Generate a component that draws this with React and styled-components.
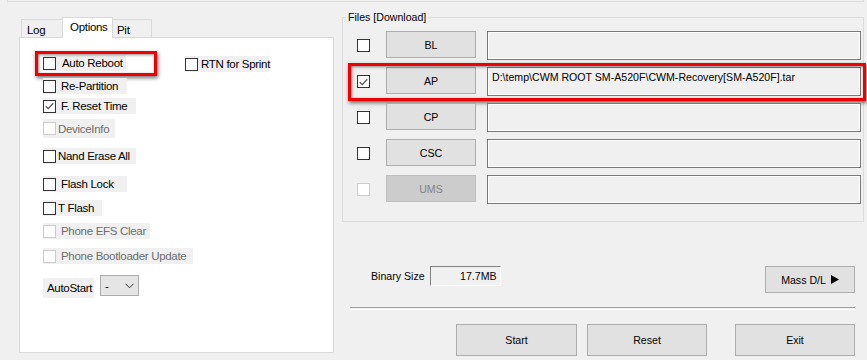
import React from 'react';
import styled, { createGlobalStyle } from 'styled-components';

const GlobalStyle = createGlobalStyle`
  html, body {
    margin: 0;
    padding: 0;
    background: #f0f0f0;
  }
  body {
    width: 867px;
    height: 360px;
    overflow: hidden;
    font-family: "Segoe UI", "Liberation Sans", Arial, sans-serif;
  }
`;

const Window = styled.div`
  width: 867px;
  height: 360px;
  background: #f0f0f0;
  overflow: hidden;
`;

const TopEdge = styled.div`
  height: 1px;
  margin: 0 3px 0 7px;
  border: 1px solid #dcdcdc;
  border-top: none;
`;

const Body = styled.div`
  display: flex;
  align-items: flex-start;
  gap: 8px;
  margin-top: 9px;
  padding-left: 19px;
`;

const LeftColumn = styled.div`
  width: 315px;
  padding-top: 6px;
  font-size: 11.5px;
  letter-spacing: -0.3px;
`;

const TabRow = styled.div`
  display: flex;
  align-items: flex-end;
  height: 21px;
  padding-left: 2px;
  margin-bottom: -1px;
`;

const Tab = styled.div`
  box-sizing: border-box;
  width: ${p => p.$w}px;
  height: ${p => (p.$active ? 21 : 18)}px;
  margin: 0 ${p => (p.$active ? -2 : 0)}px ${p => (p.$active ? 0 : 1)}px;
  padding: ${p => (p.$active ? 2 : 3)}px 0 0 ${p => (p.$active ? 7 : 5)}px;
  border: 1px solid #d9d9d9;
  border-bottom: none;
  background: ${p => (p.$active ? '#fff' : '#f0f0f0')};
  position: ${p => (p.$active ? 'relative' : 'static')};
  z-index: ${p => (p.$active ? 2 : 0)};
  line-height: 14px;
  color: #000;
`;

const Panel = styled.div`
  position: relative;
  box-sizing: border-box;
  height: 316px;
  border: 1px solid #d9d9d9;
  background: #fff;
  padding: 17px 0 0 23px;
`;

const OptionRow = styled.div`
  display: flex;
  align-items: flex-start;
`;

const Option = styled.div`
  position: relative;
  display: flex;
  align-items: center;
  box-sizing: border-box;
  width: ${p => p.$w}px;
  height: ${p => p.$h || 16}px;
  margin-top: ${p => p.$mt || 0}px;
  margin-left: ${p => p.$ml || 0}px;
  background: #f0f0f0;
  color: ${p => (p.$disabled ? '#6d6d6d' : '#000')};
  white-space: nowrap;
`;

const Box = styled.span`
  box-sizing: border-box;
  flex: none;
  display: flex;
  align-items: center;
  justify-content: center;
  width: 13px;
  height: 13px;
  border: 1px solid ${p => (p.$disabled ? '#cccccc' : '#333')};
  background: #fff;
`;

const OptionText = styled.span`
  margin-left: ${p => p.$gap}px;
  line-height: 16px;
`;

const Highlight = styled.div`
  position: absolute;
  left: ${p => p.$l}px;
  right: ${p => p.$r}px;
  top: ${p => p.$t}px;
  bottom: ${p => p.$b}px;
  border: 3px solid #f00000;
  box-shadow: 1px 2px 4px rgba(0, 0, 0, 0.55), inset 1px 1px 3px rgba(0, 0, 0, 0.45);
  pointer-events: none;
`;

const AutoStartRow = styled.div`
  display: flex;
  align-items: flex-start;
  gap: 6px;
  margin-top: 11px;
`;

const AutoLabel = styled.div`
  box-sizing: border-box;
  width: 51px;
  height: 20px;
  margin-top: 3px;
  padding-left: 4px;
  background: #f0f0f0;
  line-height: 20px;
`;

const Select = styled.div`
  box-sizing: border-box;
  display: flex;
  align-items: center;
  justify-content: space-between;
  width: 39px;
  height: 21px;
  padding: 0 4px 0 4px;
  border: 1px solid #acacac;
  background: #e5e5e5;
`;

const RightColumn = styled.div`
  width: 522px;
  font-family: Tahoma, "Liberation Sans", Arial, sans-serif;
  font-size: 10.6px;
`;

const Group = styled.fieldset`
  margin: 0;
  padding: 0 1px 17px 0;
  border: 1px solid #dcdcdc;
`;

const Legend = styled.legend`
  margin-left: 3px;
  padding: 0 2px;
  line-height: 13px;
  color: #000;
`;

const FileRow = styled.div`
  position: relative;
  display: flex;
  align-items: flex-start;
  height: 29px;
  margin-top: 7px;
  padding-left: 14px;
`;

const FileCheck = styled(Box)`
  align-self: center;
  margin-right: 16px;
`;

const FileButton = styled.div`
  box-sizing: border-box;
  display: flex;
  align-items: center;
  justify-content: center;
  width: 90px;
  height: 27px;
  border: 1px solid ${p => (p.$disabled ? '#bfbfbf' : '#adadad')};
  background: ${p => (p.$disabled ? '#cccccc' : '#e1e1e1')};
  color: ${p => (p.$disabled ? '#838383' : '#000')};
`;

const PathField = styled.div`
  box-sizing: border-box;
  width: 374px;
  height: 29px;
  margin-left: 11px;
  padding: 3px 4px;
  border: 1px solid #7a7a7a;
  box-shadow: inset 0 0 0 1px #fff;
  background: #f0f0f0;
  color: #000;
  white-space: nowrap;
  line-height: 13px;
`;

const BinaryRow = styled.div`
  display: flex;
  align-items: flex-start;
  margin-top: 44px;
  padding: 0 9px 0 29px;
`;

const BinaryLabel = styled.div`
  line-height: 20px;
  margin-right: 5px;
`;

const SizeField = styled.div`
  box-sizing: border-box;
  width: 71px;
  height: 20px;
  padding: 2px 3px 0 0;
  border: 1px solid;
  border-color: #828282 #fff #fff #828282;
  text-align: right;
  line-height: 14px;
`;

const Button = styled.div`
  box-sizing: border-box;
  display: flex;
  align-items: center;
  justify-content: center;
  gap: 5px;
  width: ${p => p.$w}px;
  height: ${p => p.$h}px;
  margin-left: ${p => p.$ml || 0}px;
  border: 1px solid #adadad;
  background: #e1e1e1;
  color: #000;
`;

const MassButton = styled(Button)`
  margin-left: auto;
`;

const Separator = styled.div`
  height: 1px;
  margin: 14px 9px 0 8px;
  border-top: 1px solid #a0a0a0;
  border-bottom: 1px solid #fff;
`;

const ActionRow = styled.div`
  display: flex;
  justify-content: flex-end;
  margin-top: 14px;
  padding-right: 9px;
`;

const Check = () => (
  <svg width="9" height="8" viewBox="0 0 9 8">
    <path d="M0.8 4.2 L3.3 6.6 L8.2 1.2" fill="none" stroke="#555" strokeWidth="1.3" />
  </svg>
);

const Chevron = () => (
  <svg width="9" height="6" viewBox="0 0 9 6">
    <path d="M0.5 0.8 L4.5 4.8 L8.5 0.8" fill="none" stroke="#333" strokeWidth="1" />
  </svg>
);

const Play = () => (
  <svg width="8" height="9" viewBox="0 0 8 9">
    <polygon points="0,0 8,4.5 0,9" fill="#000" />
  </svg>
);

const options = [
  { label: 'Re-Partition', w: 84, mt: 6, gap: 5 },
  { label: 'F. Reset Time', w: 93, mt: 4, gap: 5, checked: true },
  { label: 'DeviceInfo', w: 72, mt: 5, gap: 2, h: 19, disabled: true },
  { label: 'Nand Erase All', w: 93, mt: 10, gap: 2 },
  { label: 'Flash Lock', w: 84, mt: 12, gap: 5 },
  { label: 'T Flash', w: 59, mt: 8, gap: 2 },
  { label: 'Phone EFS Clear', w: 107, mt: 7, gap: 5, disabled: true },
  { label: 'Phone Bootloader Update', w: 150, mt: 9, gap: 5, disabled: true },
];

const files = [
  { name: 'BL' },
  { name: 'AP', checked: true, path: 'D:\\temp\\CWM ROOT SM-A520F\\CWM-Recovery[SM-A520F].tar', marked: true },
  { name: 'CP' },
  { name: 'CSC' },
  { name: 'UMS', disabled: true },
];

export default function App() {
  return (
    <Window>
      <GlobalStyle />
      <TopEdge />
      <Body>
        <LeftColumn>
          <TabRow>
            <Tab $w={43}>Log</Tab>
            <Tab $w={51} $active>Options</Tab>
            <Tab $w={41}>Pit</Tab>
          </TabRow>
          <Panel>
            <OptionRow>
              <Option $w={83}>
                <Box />
                <OptionText $gap={6}>Auto Reboot</OptionText>
                <Highlight $l={-8} $r={-31} $t={-4} $b={-5} />
              </Option>
              <Option $w={84} $ml={59} $mt={1}>
                <Box />
                <OptionText $gap={3}>RTN for Sprint</OptionText>
              </Option>
            </OptionRow>
            {options.map(o => (
              <Option key={o.label} $w={o.w} $h={o.h} $mt={o.mt} $disabled={o.disabled}>
                <Box $disabled={o.disabled}>{o.checked && <Check />}</Box>
                <OptionText $gap={o.gap}>{o.label}</OptionText>
              </Option>
            ))}
            <AutoStartRow>
              <AutoLabel>AutoStart</AutoLabel>
              <Select>
                <span>-</span>
                <Chevron />
              </Select>
            </AutoStartRow>
          </Panel>
        </LeftColumn>

        <RightColumn>
          <Group>
            <Legend>Files [Download]</Legend>
            {files.map(f => (
              <FileRow key={f.name}>
                <FileCheck $disabled={f.disabled}>{f.checked && <Check />}</FileCheck>
                <FileButton $disabled={f.disabled}>{f.name}</FileButton>
                <PathField>{f.path}</PathField>
                {f.marked && <Highlight $l={5} $r={-4} $t={-4} $b={-5} />}
              </FileRow>
            ))}
          </Group>

          <BinaryRow>
            <BinaryLabel>Binary Size</BinaryLabel>
            <SizeField>17.7MB</SizeField>
            <MassButton $w={90} $h={27}>
              Mass D/L <Play />
            </MassButton>
          </BinaryRow>

          <Separator />

          <ActionRow>
            <Button $w={121} $h={32}>Start</Button>
            <Button $w={120} $h={32} $ml={10}>Reset</Button>
            <Button $w={120} $h={32} $ml={28}>Exit</Button>
          </ActionRow>
        </RightColumn>
      </Body>
    </Window>
  );
}
